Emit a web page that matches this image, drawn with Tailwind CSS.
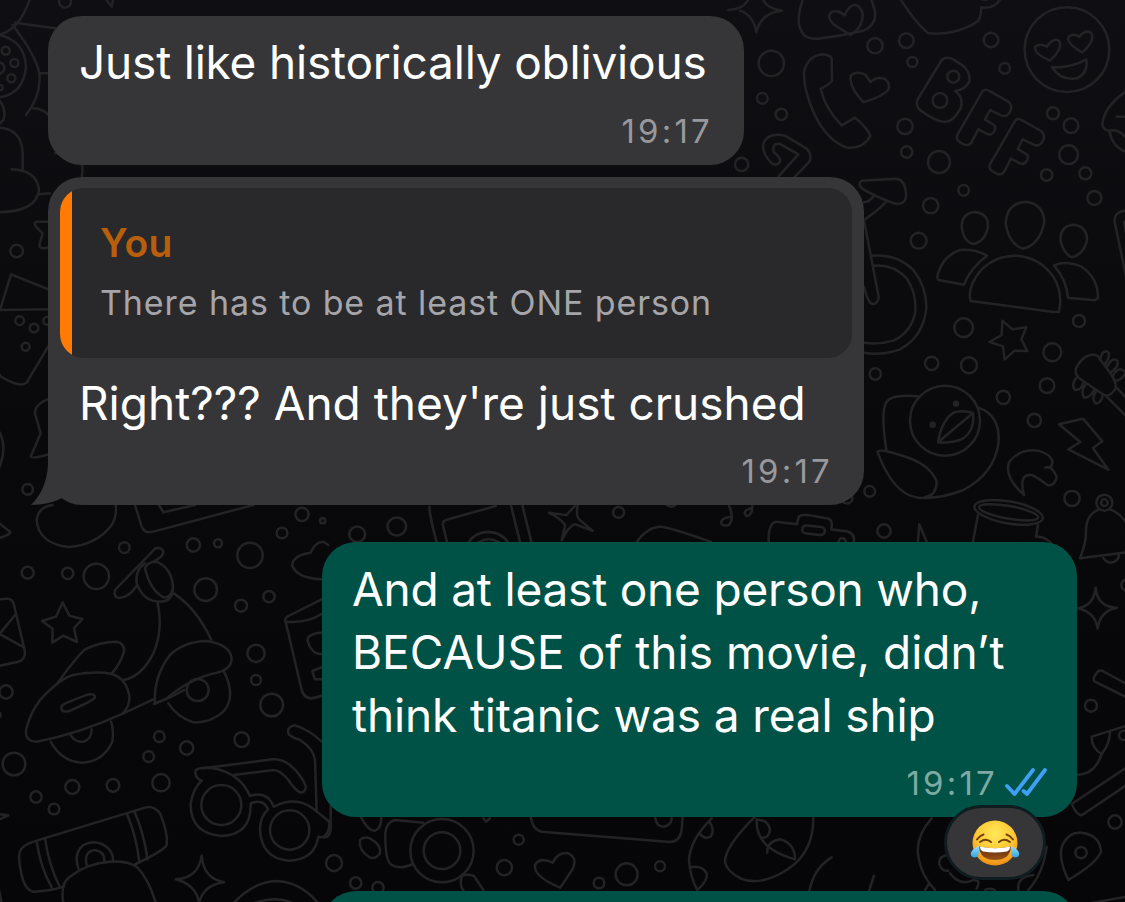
<!DOCTYPE html>
<html lang="en">
<head>
    <meta charset="UTF-8">
    <meta name="viewport" content="width=device-width, initial-scale=1.0">
    <title>Chat</title>
    <script src="https://cdn.jsdelivr.net/npm/@tailwindcss/browser@4"></script>
</head>
<body class="bg-[#08080a]">
    <div class="relative w-[1125px] h-[902px] overflow-hidden bg-linear-to-b from-[#0f0f13] via-[#09090c] to-[#060608] font-['Inter',sans-serif] text-white">

        <!-- Doodle wallpaper -->
        <svg class="absolute inset-0 text-[#232326]" width="1125" height="902" viewBox="0 0 1125 902" fill="none" stroke="currentColor" stroke-width="7.5" stroke-linecap="round" stroke-linejoin="round">
            <!-- top right: phone, bff, emoji -->
            <g transform="translate(740 0) scale(.33333)">
                <path d="M-35 30 Q25 28 32 -25 M62 -20 Q70 25 126 32 Q62 38 49 97 Q40 45 0 32"/>
                <path d="M190 -5 Q165 60 185 95 Q195 118 235 116 Q300 108 370 92 Q410 75 405 35 L393 -5"/>
                <path d="M331 105 L282 74 Q257 48 274 37 Q294 28 314 46 Q329 10 351 16 Q374 30 366 62 Q358 90 331 105 Z"/>
                <path d="M480 -5 Q520 60 562 98 Q590 105 640 95 Q690 82 715 62 Q724 45 724 22 Q765 28 782 -5 M724 -3 Q740 2 748 -5"/>
                <path d="M275 178 Q277 168 250 163 Q205 165 192 215 Q190 280 235 365 Q270 425 320 443 Q370 447 391 408 Q380 380 345 353 L305 376 Q255 325 242 266 Q262 258 276 243 Z"/>
                <path d="M371 307 Q325 260 333 226 Q350 212 376 224 L392 246 Q410 228 435 237 Q452 250 445 269 Q430 288 371 307 Z"/>
                <path d="M605 180 Q620 168 640 178 L672 199 Q692 220 688 245 Q675 270 645 273 Q672 290 662 325 Q640 365 615 366 Q590 366 545 334 Q525 320 532 300 Z"/>
                <circle cx="640" cy="230" r="18"/><circle cx="600" cy="301" r="22"/>
                <path id="f" d="M728 273 Q737 265 750 274 L805 305 Q820 318 810 335 Q802 352 785 347 L750 330 L735 359 L762 375 Q770 382 762 395 Q754 407 742 402 L715 388 L694 428 Q685 440 670 432 Q645 422 652 405 Z"/>
                <use href="#f" x="98" y="88"/>
                <circle cx="981" cy="149" r="127"/>
                <path d="M930 182 Q880 160 886 140 Q900 128 921 140 Q940 112 957 122 Q970 145 930 182 Z M1027 157 Q978 130 986 110 Q1000 98 1018 110 Q1035 88 1053 98 Q1068 120 1027 157 Z M936 201 Q990 205 1039 179 Q1045 220 1010 235 Q960 242 936 201 Z"/>
                <path d="M1160 273 Q1090 320 1087 375 Q1090 390 1108 392 Q1115 440 1160 457 M1110 392 Q1135 385 1160 415 M1130 350 H1160"/>
                <path d="M165 530 L208 485 Q218 465 200 446 L135 407 Q85 395 70 430 Q65 460 95 490 Q110 500 121 484 Q120 470 101 456 Q95 430 118 431 L175 463 L115 530"/>
                <circle cx="405" cy="137" r="23"/><circle cx="499" cy="122" r="22"/><circle cx="517" cy="186" r="15"/><circle cx="753" cy="120" r="22"/><circle cx="794" cy="205" r="16"/>
                <circle cx="94" cy="190" r="38"/><circle cx="67" cy="295" r="16"/><circle cx="124" cy="343" r="17"/><circle cx="5" cy="493" r="20"/>
                <circle cx="495" cy="379" r="23"/><circle cx="500" cy="456" r="17"/><circle cx="597" cy="486" r="33"/><circle cx="939" cy="340" r="18"/><circle cx="993" cy="377" r="22"/><circle cx="986" cy="464" r="28"/><circle cx="920" cy="525" r="17"/><circle cx="1036" cy="520" r="18"/>
            </g>
            <!-- bicycle, people, star -->
            <g transform="translate(850 170) scale(.33333)">
                <path d="M35 32 L140 26 Q165 30 168 70 Q170 100 145 102 Q120 100 45 61 Q18 45 35 32 Z M42 97 Q60 95 71 78 M42 150 Q80 125 106 98 M42 150 L86 380 Q85 402 68 402 Q55 402 42 350"/>
                <path d="M65 257 Q140 250 190 300 Q230 350 229 415 Q220 500 150 538 Q90 558 42 548 M73 287 Q130 282 170 325 Q200 370 196 425 Q185 485 130 512 Q85 525 42 518"/>
                <path d="M375 126 Q415 130 414 170 Q405 215 370 222 Q340 215 335 170 Q335 130 375 126 Z M526 95 Q580 100 583 155 Q570 225 518 236 Q475 220 467 160 Q470 100 526 95 Z M672 164 Q712 170 711 212 Q700 255 665 262 Q640 250 631 210 Q632 165 672 164 Z"/>
                <path d="M265 330 Q260 322 264 310 Q280 258 330 240 Q375 236 411 257 Q360 295 342 344 Z M362 393 Q350 350 395 298 Q440 255 500 257 Q570 262 610 320 Q640 370 627 425 L610 426 Z M612 286 Q650 270 695 290 Q745 325 744 385 L735 391 L654 383 Q650 330 612 286 Z"/>
                <path d="M457 452 L487 478 L529 472 L514 508 L532 543 L494 542 L464 568 L459 529 L419 516 L455 495 Z"/>
                <path d="M830 122 Q790 125 794 155 L830 330 M822 155 L830 200"/>
                <circle cx="733" cy="84" r="21"/><circle cx="341" cy="61" r="16"/><circle cx="242" cy="107" r="23"/><circle cx="206" cy="212" r="24"/>
                <circle cx="341" cy="473" r="28"/><circle cx="687" cy="453" r="18"/><circle cx="607" cy="547" r="27"/><circle cx="245" cy="580" r="20"/><circle cx="357" cy="586" r="24"/><circle cx="76" cy="612" r="17"/>
            </g>
            <!-- duck, brush, lightning, jar -->
            <g transform="translate(850 370) scale(.33333)">
                <circle cx="285" cy="152" r="105"/>
                <path d="M109 240 Q92 130 108 98 Q125 70 210 80 M385 113 Q450 135 446 215 Q435 310 340 360 Q270 388 205 383 Q130 375 82 245 Q90 235 150 255 Q240 280 260 335 Q260 375 225 382"/>
                <path d="M264 217 Q275 150 312 127 Q345 120 369 129 Q375 180 340 205 Q310 220 264 217 L369 129"/>
                <circle cx="318" cy="101" r="6" fill="currentColor"/><circle cx="248" cy="164" r="6" fill="currentColor"/>
                <path d="M627 163 L699 146 L757 214 L729 234 L775 299 L655 238 L691 216 Z"/>
                <path d="M522 375 Q460 320 478 275 Q510 235 565 242 Q620 260 603 290 L585 293 Q605 285 620 320 Q615 350 592 345 Q560 320 545 315 Q505 310 522 375 Z"/>
                <ellipse cx="476" cy="427" rx="104" ry="33" transform="rotate(10 476 427)"/>
                <ellipse cx="476" cy="427" rx="90" ry="19" transform="rotate(10 476 427)"/>
                <path d="M384 434 L368 520 M564 466 L558 500 Q580 498 605 520 M203 520 L208 463 L232 520"/>
                <path d="M722 -45 Q695 -40 678 -5 Q672 15 695 30 L762 75 Q780 82 797 55 Q800 35 778 5 L745 -40 Q735 -50 722 -45 Z"/>
                <path d="M680 22 Q662 45 675 60 Q695 60 700 38 M706 45 Q690 65 703 83 Q722 82 732 60 M738 65 Q722 88 738 101 Q755 98 758 76 M750 -30 Q755 -60 772 -56 Q785 -45 764 -17 M770 -8 Q785 -40 802 -28 Q808 -10 781 8 M787 20 Q805 -15 825 5 M797 32 Q815 30 825 12"/>
                <path d="M770 80 L830 140 M797 50 L830 85"/>
                <circle cx="763" cy="398" r="24"/><circle cx="763" cy="398" r="10"/>
                <circle cx="460" cy="82" r="20"/><circle cx="591" cy="47" r="22"/><circle cx="553" cy="151" r="20"/><circle cx="666" cy="385" r="23"/><circle cx="59" cy="364" r="16"/><circle cx="102" cy="483" r="20"/>
            </g>
            <!-- right edge: bell, sparkle, map pin -->
            <g transform="translate(1000 480) scale(.33333)">
                <path d="M297 88 Q255 105 258 160 Q258 190 240 235 L380 217 M330 88 Q360 98 380 130 M310 234 Q325 255 345 244 Q360 235 355 222"/>
                <path d="M287 323 Q292 382 351 383 Q300 392 293 446 Q285 395 232 385 Q282 378 287 323 Z"/>
                <path d="M380 612 L308 573 Q295 568 288 582 Q275 600 285 605 L380 652 M380 737 L275 770 Q275 805 305 822 Q330 790 330 755 M305 822 Q285 885 228 884 M380 862 L215 972 Q230 1005 245 1006 L380 915"/>
                <path d="M205 1200 Q170 1125 190 1090 Q210 1055 245 1058 Q300 1065 303 1115 Q290 1150 205 1200 Z"/>
                <circle cx="243" cy="1118" r="17"/><circle cx="273" cy="677" r="18"/><circle cx="345" cy="1026" r="20"/><circle cx="380" cy="315" r="16"/><circle cx="371" cy="766" r="14"/>
                <path d="M240 1275 L380 1250"/>
            </g>
            <!-- left edge: cookie, clouds, cup -->
            <g transform="scale(.33333)">
                <path d="M90 -5 Q60 90 -5 105 M45 68 L165 85 M38 75 Q110 170 118 220 Q125 285 78 345 M118 220 H150 M98 325 Q130 325 150 350 M0 105 Q75 125 78 200 Q70 285 -5 292 M0 303 Q20 330 10 360 L-5 375 M-5 383 Q65 385 68 460 V507 M35 508 Q110 510 117 570 Q110 635 -5 637 M117 583 L150 580 M165 460 H180 M245 490 Q250 510 245 530"/>
                <path d="M150 665 H108 Q100 670 108 680 L128 700 L118 735 Q118 750 150 742"/>
                <path d="M0 930 L33 823 L150 870 M0 930 L150 928 M0 1128 Q60 1165 80 1148 L150 1030 M150 1195 Q105 1210 105 1240 L122 1300 L92 1370 Q95 1378 150 1362 M-5 1290 Q25 1340 -5 1410 M0 1125 L-10 1118"/>
                <circle cx="17" cy="152" r="12"/><circle cx="43" cy="189" r="12"/><circle cx="34" cy="235" r="12"/><circle cx="-4" cy="204" r="17"/><circle cx="0" cy="263" r="8"/><circle cx="195" cy="5" r="18"/><path d="M315 -5 L335 20 L340 -5"/>
                <circle cx="50" cy="753" r="19"/><circle cx="59" cy="962" r="13"/><circle cx="102" cy="984" r="13"/><circle cx="77" cy="1040" r="12"/><circle cx="142" cy="962" r="12"/><circle cx="83" cy="1468" r="16"/>
            </g>
            <!-- lamp, star, scooter, envelope -->
            <g transform="translate(0 490) scale(.33333)">
                <path d="M158 45 Q115 50 110 90 Q115 160 205 171 Q290 165 335 105 Q352 75 347 45 M405 45 L425 110 Q435 132 460 125 L760 45 M477 45 L490 67 L585 45 M-5 98 L30 125 Q35 133 -5 145"/>
                <path d="M466 175 Q485 170 490 185 Q490 200 460 215 M466 175 L345 300 Q340 320 355 324 Q385 325 412 285"/>
                <path d="M470 215 Q515 235 519 290 Q515 325 490 322 Q450 300 435 235 Q440 215 470 215 Z M435 220 Q405 240 410 280 Q430 335 480 335 Q515 335 519 300"/>
                <path d="M473 340 Q490 420 460 490 Q425 560 370 570 M521 310 Q590 355 634 450"/>
                <path d="M188 337 L208 377 L247 387 L222 415 L231 456 L190 437 L157 458 L158 416 L126 393 L168 380 Z"/>
                <path d="M-5 328 L20 326 Q38 325 42 345 L75 485 Q75 510 55 515 L-5 528 M48 372 L0 430 M-5 430 L72 472"/>
                <path d="M172 580 Q230 500 255 478 Q300 455 350 455 Q375 460 372 485 Q360 525 335 550 M120 630 Q180 565 220 555 Q290 542 335 552 Q380 565 388 620 Q390 650 368 670"/>
                <path d="M465 640 Q460 560 510 495 Q550 455 620 453 Q695 465 695 510 Q690 540 650 548 Q570 565 500 625 L462 642 M672 545 Q710 620 670 665 Q630 700 580 697 Q530 680 505 640"/>
                <circle cx="593" cy="600" r="33"/>
                <path d="M965 268 Q890 265 876 225 Q880 195 932 188 Q945 155 970 155 L985 165 M965 328 L865 378 Q850 385 858 400 L905 600 Q910 625 935 625 L965 617 M860 395 Q920 400 965 372 M965 428 Q925 430 922 450 Q935 495 965 492 M965 532 L937 543 L945 568 H965"/>
                <circle cx="83" cy="248" r="18"/><circle cx="203" cy="250" r="17"/><circle cx="289" cy="259" r="38"/><circle cx="373" cy="173" r="16"/><circle cx="580" cy="165" r="20"/><circle cx="654" cy="160" r="12"/><circle cx="750" cy="196" r="38"/><circle cx="617" cy="299" r="34"/><circle cx="723" cy="347" r="18"/><circle cx="807" cy="320" r="17"/><circle cx="846" cy="129" r="16"/><circle cx="906" cy="73" r="20"/><circle cx="968" cy="92" r="8"/><circle cx="768" cy="490" r="26"/><circle cx="768" cy="570" r="15"/><circle cx="18" cy="606" r="20"/>
            </g>
            <!-- scooter wheels, glasses, skateboard -->
            <g transform="translate(0 690) scale(.33333)">
                <path d="M120 30 Q90 70 78 120 Q75 155 110 155 Q240 130 370 70 L460 28 M465 40 Q500 30 552 0 M185 48 Q190 40 265 13 Q285 10 285 22 Q280 32 205 64 Q180 68 185 48 Z M152 155 Q185 215 245 218 Q310 215 337 155 Q342 120 333 95 M212 135 Q225 158 250 155 Q275 150 275 118"/>
                <path d="M610 235 L815 208 Q845 205 870 225 Q905 255 918 290 Q915 310 900 307 Q885 300 865 270 Q840 240 820 240 L700 255"/>
                <path d="M605 272 Q580 260 588 240 Q600 230 640 235 Q720 250 750 318 Q800 300 822 350 Q890 315 945 360 L988 395 Q990 435 965 442 L955 440 Q945 510 865 512 Q785 505 780 420 Q780 380 804 358 Q790 325 752 340 Q755 435 664 438 Q570 430 572 340 Q580 295 605 272"/>
                <circle cx="664" cy="345" r="60"/><circle cx="869" cy="420" r="59"/>
                <path d="M965 155 Q930 120 885 106 Q860 110 865 130 Q870 140 900 150 Q940 175 945 210 L950 365 M905 0 Q915 28 940 25 L965 18"/>
                <path d="M190 590 Q160 602 100 605 Q75 600 65 555 Q50 490 65 475 Q80 460 110 452 L435 353 Q460 345 480 370 Q505 430 500 465 Q495 480 405 523 M110 452 Q120 530 155 592 M135 445 Q145 520 178 588 M380 370 Q410 440 418 518 M403 363 Q435 440 442 508"/>
                <path d="M235 535 Q220 490 250 465 Q290 445 325 475 Q342 495 338 513 M260 525 Q250 485 285 480 Q315 485 313 515 M190 640 Q180 580 210 560 Q260 520 330 515 Q380 512 410 530 Q445 565 468 640"/>
                <path d="M605 497 Q610 565 672 577 Q610 585 597 640 Q590 585 527 568 Q595 565 605 497 Z M700 640 Q760 575 830 573 Q900 575 955 640 M760 640 Q830 615 880 640 M-5 372 L25 376 L-5 390 M-5 590 L5 640"/>
                <circle cx="815" cy="45" r="34"/><circle cx="478" cy="140" r="16"/><circle cx="446" cy="200" r="16"/><circle cx="560" cy="174" r="20"/><circle cx="725" cy="149" r="22"/><circle cx="42" cy="222" r="34"/><circle cx="217" cy="291" r="21"/><circle cx="339" cy="286" r="19"/><circle cx="483" cy="278" r="26"/><circle cx="108" cy="321" r="17"/><circle cx="162" cy="357" r="16"/><circle cx="-6" cy="75" r="8"/>
            </g>
            <!-- strip between the bubbles -->
            <g transform="translate(320 490) scale(.3444 .335)">
                <path d="M318 50 Q318 80 340 160 M370 160 L357 105 Q355 92 370 88 L510 48 M555 48 L582 160 M588 48 L615 160 M430 158 Q450 125 490 125 Q530 128 548 158 M460 156 Q490 138 520 156"/>
                <path d="M740 48 L715 75 L665 68 Q700 85 712 105 L702 150 Q720 110 740 102 L792 122 L755 90 Q742 80 748 48"/>
                <path d="M918 158 Q950 110 990 110 Q1010 110 1135 155 M1188 48 Q1205 90 1185 105 Q1165 110 1165 95 Q1170 82 1195 80 M1255 48 Q1255 75 1240 78 Q1228 70 1238 60 L1255 52"/>
                <path d="M1303 158 Q1300 100 1325 95 L1385 102 L1390 80 Q1395 73 1420 75 L1475 85 Q1490 88 1485 118 L1530 123 Q1555 130 1550 158"/>
                <rect x="1400" y="108" width="66" height="24" rx="12" transform="rotate(6 1433 120)"/>
                <circle cx="108" cy="132" r="23"/><circle cx="223" cy="109" r="27"/><circle cx="867" cy="67" r="16"/><circle cx="1516" cy="154" r="10"/><circle cx="1530" cy="24" r="16"/><circle cx="1020" cy="32" r="18"/>
            </g>
            <!-- bottom: camera, heart, pizza -->
            <g transform="translate(320 790) scale(.33333)">
                <path d="M310 98 L225 90 Q200 95 196 130 Q195 215 215 225 Q240 240 278 222 M122 80 Q145 125 165 122 Q185 115 184 80 M120 150 Q130 138 150 145 Q185 165 180 190 Q165 210 148 202 Q115 180 120 150 Z M490 300 L462 258 Q440 250 425 258 Q418 290 430 300 M490 85 L498 95 L510 85 M32 45 V120 Q28 145 10 142"/>
                <circle cx="366" cy="182" r="95"/><circle cx="366" cy="182" r="55"/>
                <path d="M632 80 Q638 120 665 125 L1050 156 Q1080 155 1085 120 L1088 80 M1006 85 Q1010 110 1032 110 Q1055 105 1055 85"/>
                <path d="M721 293 Q640 260 645 225 Q660 200 698 218 Q715 185 745 190 Q775 205 756 240 Z"/>
                <path d="M1175 85 Q1110 150 1107 210 Q1110 260 1132 300 Q1165 270 1160 250 Q1145 225 1112 232 M1138 128 Q1150 150 1172 140 Q1185 120 1170 98 M1305 80 Q1215 170 1215 215 Q1220 245 1262 265"/>
                <circle cx="42" cy="219" r="24"/><circle cx="107" cy="279" r="17"/><circle cx="174" cy="293" r="17"/><circle cx="596" cy="149" r="15"/><circle cx="553" cy="233" r="23"/><circle cx="837" cy="279" r="16"/><circle cx="920" cy="253" r="33"/><circle cx="1020" cy="229" r="15"/>
            </g>
            <g transform="translate(740 760) scale(.33333)">
                <path d="M50 178 Q45 265 165 298 Q165 250 120 238 Q80 245 82 278 M55 180 Q85 180 90 210 Q85 238 62 232 M220 175 Q220 280 140 330 Q60 380 0 355 M208 395 Q220 325 275 292 M388 390 L402 347 M575 175 Q525 230 535 290 Q545 350 585 390 M920 260 Q910 340 865 390 M620 285 Q595 290 598 312 Q605 335 625 332 M630 340 Q660 380 700 360 Q725 360 710 385 M835 390 Q830 350 880 345 M555 390 L568 370 M735 390 Q750 382 765 390"/>
            </g>
        </svg>

        <!-- Messages -->
        <div class="relative flex flex-col pt-4">
            <div class="ml-12 w-[696px] h-[149px] rounded-[34px] bg-[#363638] pl-[31px] pr-[31px]">
                <p class="pt-[14px] text-[46px] leading-[64px] tracking-[-0.2px] whitespace-nowrap">Just like historically oblivious</p>
                <p class="mt-[19px] text-right text-[33px] leading-9 tracking-[3.2px] text-[#98989d]">19:17</p>
            </div>

            <div class="relative mt-3 ml-12 w-[816px] h-[328px] rounded-[34px] bg-[#363638] px-3 pt-[11px]">
                <svg class="absolute left-[-17px] top-[272px]" width="60" height="57" viewBox="0 0 60 57" fill="#363638"><path d="M17 0V15Q16 40 0 56Q18 56 31 49Q42 56 58 56V0Z"/></svg>
                <div class="relative flex h-[170px] overflow-hidden rounded-3xl bg-[#29292b]">
                    <div class="w-3 bg-[#ff7b06]"></div>
                    <div class="pl-7 pt-[31px]">
                        <p class="text-[39px] leading-[48px] font-semibold tracking-[0.4px] text-[#b75f0c]">You</p>
                        <p class="mt-3 text-[34px] leading-[48px] tracking-[0.9px] whitespace-nowrap text-[#a5a5aa]">There has to be at least ONE person</p>
                    </div>
                </div>
                <p class="relative pl-[19px] pt-[13px] text-[46px] leading-[64px] tracking-[0px] whitespace-nowrap">Right??? And they're just crushed</p>
                <p class="relative mt-[18px] pr-[19px] text-right text-[33px] leading-9 tracking-[3.2px] text-[#98989d]">19:17</p>
            </div>

            <div class="relative mt-[37px] ml-[322px] w-[755px] h-[275px] rounded-[34px] bg-[#005246] pl-[30px] pr-[30px]">
                <div class="pt-4 text-[46px] leading-[63px] whitespace-nowrap">
                    <p class="tracking-[-0.2px]">And at least one person who,</p>
                    <p class="tracking-[0.01px]">BECAUSE of this movie, didn’t</p>
                    <p class="tracking-[-0.14px]">think titanic was a real ship</p>
                </div>
                <div class="mt-[18px] flex items-center justify-end gap-[7px]">
                    <span class="text-[33px] leading-9 tracking-[3.2px] text-[#7fa9a2]">19:17</span>
                    <svg width="42" height="30" viewBox="0 0 42 30" fill="none" stroke="#3f9ff5" stroke-width="3.8" stroke-linecap="round" stroke-linejoin="round"><path d="M2 18L9.5 26L28 2M18.500 23L22 26L40 2"/></svg>
                </div>

                <!-- Reaction -->
                <div class="absolute left-[622px] top-[263px] flex h-[75px] w-[102px] items-center justify-center rounded-full border-[3px] border-[#0f1c20] bg-[#363638]">
                    <svg width="50" height="48" viewBox="0 0 50 48">
                        <defs>
                            <radialGradient id="face" cx=".5" cy=".3" r=".72"><stop offset="0" stop-color="#ffe85a"/><stop offset=".55" stop-color="#fdc934"/><stop offset="1" stop-color="#ee8a12"/></radialGradient>
                            <linearGradient id="mouth" x2="0" y2="1"><stop offset="0" stop-color="#5b2a0c"/><stop offset="1" stop-color="#9a5316"/></linearGradient>
                            <linearGradient id="tear" x2="0" y2="1"><stop offset="0" stop-color="#9be0fb"/><stop offset="1" stop-color="#2fa3e6"/></linearGradient>
                        </defs>
                        <circle cx="25" cy="24" r="22.5" fill="url(#face)"/>
                        <path d="M9 27.500Q25 31 41 27.500Q40 41 25 41Q10 41 9 27.500Z" fill="url(#mouth)"/>
                        <path d="M9.500 27.500Q25 31 40.500 27.500Q40 31 37 32.500Q25 34.500 13 32.500Q10 31 9.500 27.500Z" fill="#fff"/>
                        <path d="M10 23Q16 18.500 21 23M29 23Q34 18.500 40 23M7 20.500Q10 16.500 13.500 15.500M36.500 15.500Q40 16.500 43 20.500" fill="none" stroke="#70400c" stroke-width="2" stroke-linecap="round"/>
                        <path d="M9 27Q10 38 5 38.500Q0 38 1 33.500Q3 29 9 27ZM41 27Q40 38 45 38.500Q50 38 49 33.500Q47 29 41 27Z" fill="url(#tear)"/>
                    </svg>
                </div>
            </div>

            <div class="mt-[74px] ml-[322px] h-20 w-[755px] rounded-[34px] bg-[#005246]"></div>
        </div>
    </div>
</body>
</html>
